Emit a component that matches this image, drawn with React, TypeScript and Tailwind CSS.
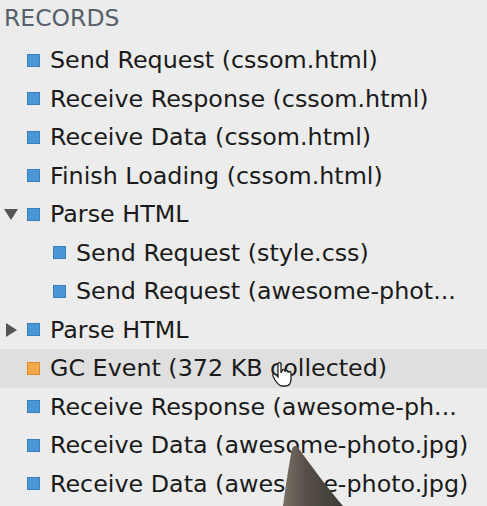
const rows: { label: string; level: number; color: "blue" | "orange"; arrow?: "down" | "right"; hover?: boolean }[] = [
  { label: "Send Request (cssom.html)", level: 0, color: "blue" },
  { label: "Receive Response (cssom.html)", level: 0, color: "blue" },
  { label: "Receive Data (cssom.html)", level: 0, color: "blue" },
  { label: "Finish Loading (cssom.html)", level: 0, color: "blue" },
  { label: "Parse HTML", level: 0, color: "blue", arrow: "down" },
  { label: "Send Request (style.css)", level: 1, color: "blue" },
  { label: "Send Request (awesome-phot...", level: 1, color: "blue" },
  { label: "Parse HTML", level: 0, color: "blue", arrow: "right" },
  { label: "GC Event (372 KB collected)", level: 0, color: "orange", hover: true },
  { label: "Receive Response (awesome-ph...", level: 0, color: "blue" },
  { label: "Receive Data (awesome-photo.jpg)", level: 0, color: "blue" },
  { label: "Receive Data (awesome-photo.jpg)", level: 0, color: "blue" },
];

export default function App() {
  return (
    <div
      className="relative w-[487px] h-[506px] overflow-hidden bg-[#ececec] text-[#1a1a1a]"
      style={{ fontFamily: "'DejaVu Sans', Verdana, sans-serif" }}
    >
      <div className="h-[41px] pl-[4px] pt-[3px] text-[23.5px] leading-[30px] text-[#56606b]">RECORDS</div>
      {rows.map((r, i) => (
        <div
          key={i}
          className={`flex items-center h-[38.5px] ${r.hover ? "bg-[#dfdfdf]" : ""}`}
        >
          <div className={`flex items-center shrink-0 ${r.level === 1 ? "w-[53px]" : "w-[27px]"}`}>
            {r.arrow === "down" && (
              <svg width="14" height="12" viewBox="0 0 14 12" className="ml-[4px]">
                <path d="M0 1 L14 1 L7 12 Z" fill="#555" />
              </svg>
            )}
            {r.arrow === "right" && (
              <svg width="12" height="14" viewBox="0 0 12 14" className="ml-[5px]">
                <path d="M1 0 L12 7 L1 14 Z" fill="#555" />
              </svg>
            )}
          </div>
          <span
            className={`shrink-0 w-[13px] h-[13px] border ${
              r.color === "blue" ? "bg-[#4b96d6] border-[#3a7fbf]" : "bg-[#f5a94a] border-[#d98a2a]"
            }`}
          />
          <span className="ml-[10px] text-[23.8px] leading-[30px] whitespace-nowrap">{r.label}</span>
        </div>
      ))}
      <svg className="absolute left-[272px] top-[362px]" width="22" height="26" viewBox="0 0 22 26">
        <path
          d="M6 2 C6 0 9 0 9 2 L9 11 L10 9 C10 7 13 7 13 9 L13 10 C13 8 16 8 16 10 L16 11 C16 9 19 9 19 11 L19 17 C19 21 17 24 13 24 L10 24 C7 24 5 21 3 18 L1 14 C0 12 2 11 4 13 L6 15 Z"
          fill="#fff"
          stroke="#222"
          strokeWidth="1.3"
        />
      </svg>
      <svg className="absolute left-[270px] top-[444px]" width="80" height="62" viewBox="0 0 80 62">
        <defs>
          <linearGradient id="g" x1="0" y1="0" x2="1" y2="0">
            <stop offset="0" stopColor="#7a7066" />
            <stop offset="0.4" stopColor="#554e48" />
            <stop offset="1" stopColor="#3e3934" />
          </linearGradient>
        </defs>
        <path d="M22 5 C23 1 27 1 29 5 C40 20 56 42 73 62 L13 62 C16 40 19 20 22 5 Z" fill="url(#g)" />
      </svg>
    </div>
  );
}
